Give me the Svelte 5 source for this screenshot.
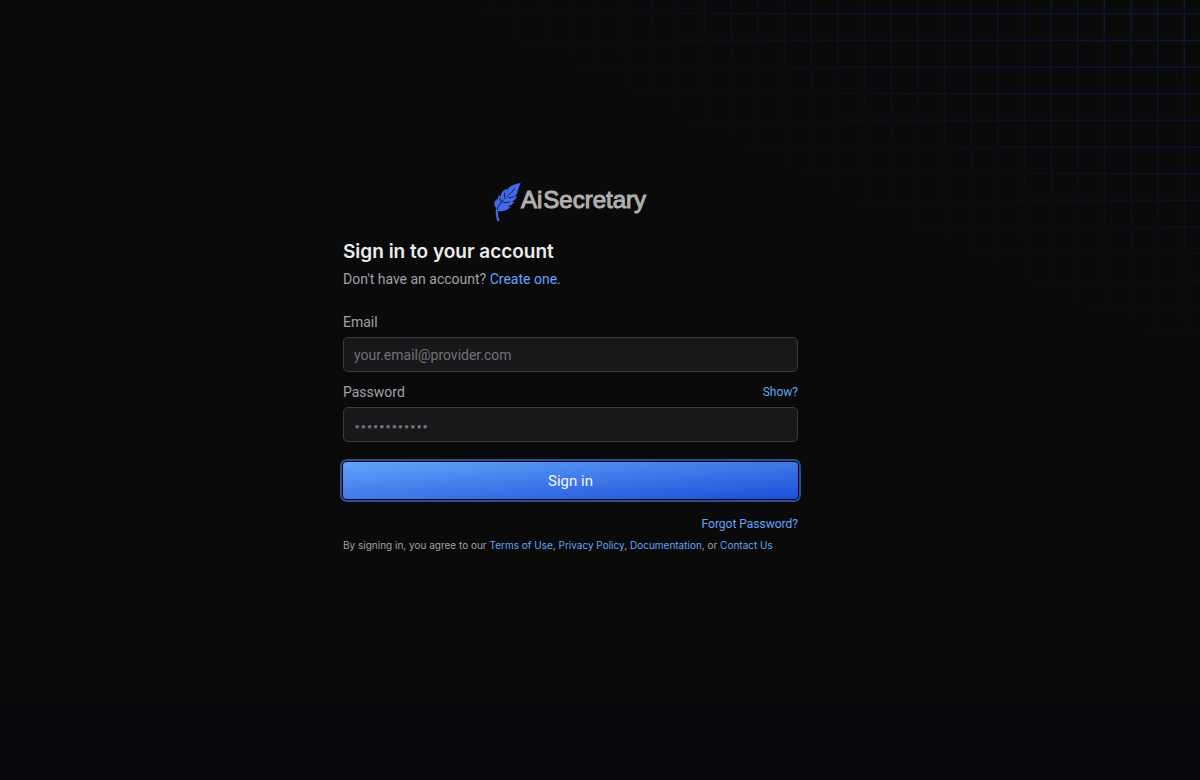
<script>
  let email = $state('');
  let password = $state('');
  let visible = $state(false);
</script>

<div class="page">
  <svg class="grid" aria-hidden="true">
    <defs>
      <pattern id="cells" width="80" height="80" patternUnits="userSpaceOnUse">
        <path
          d="M11 0V80M37.6 0V80M64.3 0V80M0 13.8H80M0 40.5H80M0 67.2H80"
          stroke="#1a3fc4"
          stroke-width="1.4"
          fill="none"
        />
      </pattern>
    </defs>
    <rect width="100%" height="100%" fill="url(#cells)" />
  </svg>

  <main>
    <div class="card">
      <div class="logo">
        <svg viewBox="41 36 81 120" aria-hidden="true">
          <path
            fill="#4169e8"
            d="M121 38C108 42 96 44 87 52C82 56 81 60 79 64L80 56C72 58 66 63 63 70C61 75 62 79 62 83L59 75C52 80 51 86 52 93L48 87C42 94 41 101 43 108L47 114C45 127 47 141 51 154L58 152C54 141 52 131 53 123C61 125 70 124 78 120C83 118 87 115 90 110L82 109C91 107 98 103 102 96L94 95C102 92 108 87 110 79L103 79C110 74 113 67 112 61C115 54 118 46 121 38Z"
          />
          <path
            fill="none"
            stroke="#0a0a0a"
            stroke-width="2.4"
            stroke-linecap="round"
            d="M50 119C54 108 61 98 70 89M80 80C89 72 97 64 103 56M64 97C60 93 59 89 59 85M75 85C72 81 71 75 73 69M70 97C76 99 82 98 88 95M86 83C91 84 96 82 100 80"
          />
        </svg>
        <span>Ai</span>
        <span>Secretary</span>
      </div>

      <h1>Sign in to your account</h1>
      <p class="sub">Don't have an account? <a href="#signup">Create one.</a></p>

      <form onsubmit={(e) => e.preventDefault()}>
        <div class="row">
          <label for="email">Email</label>
        </div>
        <input id="email" type="email" placeholder="your.email@provider.com" bind:value={email} />

        <div class="row">
          <label for="password">Password</label>
          <button class="link" type="button" onclick={() => (visible = !visible)}>
            {visible ? 'Hide?' : 'Show?'}
          </button>
        </div>
        <input
          id="password"
          type={visible ? 'text' : 'password'}
          placeholder="••••••••••••"
          bind:value={password}
        />

        <button class="submit" type="submit">Sign in</button>
      </form>

      <a class="forgot" href="#forgot">Forgot Password?</a>
      <p class="terms">
        By signing in, you agree to our <a href="#terms">Terms of Use</a>,
        <a href="#privacy">Privacy Policy</a>, <a href="#docs">Documentation</a>, or
        <a href="#contact">Contact Us</a>
      </p>
    </div>
  </main>
  <footer></footer>
</div>

<style>
  :global(body) {
    margin: 0;
    background: #05050a;
  }
  .page {
    position: relative;
    display: flex;
    flex-direction: column;
    min-height: 100vh;
    background: #0a0a0a;
    color: #a1a1aa;
    font: 14px/20px Roboto, sans-serif;
  }
  .grid {
    position: absolute;
    top: 0;
    right: 0;
    width: 60%;
    height: 340px;
    opacity: 0.26;
    mask-image: linear-gradient(to top right, transparent 43%, #000 95%);
  }
  main {
    position: relative;
    flex: 1;
    display: flex;
    justify-content: center;
    padding: 180px 80px 24px 21px;
  }
  footer {
    height: 76px;
    background: #05050a;
  }
  .card {
    display: flex;
    flex-direction: column;
    width: 100%;
    max-width: 455px;
  }
  .logo {
    display: flex;
    align-items: center;
    justify-content: center;
    height: 44px;
    color: #b0b0b0;
    font: 24px/28px 'Liberation Sans', sans-serif;
    -webkit-text-stroke: 1px #b0b0b0;
  }
  .logo svg {
    width: 27px;
    height: 40px;
  }
  .logo span {
    padding: 0 1px 4px 0;
  }
  h1 {
    margin: 14px 0 0;
    color: #ececee;
    font-family: Inter, sans-serif;
    font-size: 19px;
    font-weight: 600;
    line-height: 28px;
  }
  p {
    margin: 0;
  }
  .sub {
    margin: 3px 0 23px;
  }
  a,
  .link {
    color: #60a5fa;
    text-decoration: none;
  }
  form {
    display: flex;
    flex-direction: column;
  }
  .row {
    display: flex;
    align-items: center;
    justify-content: space-between;
    margin-bottom: 5px;
  }
  input {
    box-sizing: border-box;
    width: 100%;
    height: 35px;
    margin-bottom: 10px;
    padding: 0 10px;
    border: 1px solid #3a3a40;
    border-radius: 5px;
    background: #18181a;
    color: #f0f0f1;
    font: inherit;
  }
  input::placeholder {
    color: #71717a;
    opacity: 1;
  }
  #password::placeholder {
    font-family: Inter, sans-serif;
    font-size: 11px;
  }
  button {
    border: 0;
    font: inherit;
    cursor: pointer;
  }
  .link {
    padding: 0;
    background: none;
    font-size: 12px;
  }
  .submit {
    height: 37px;
    margin-top: 10px;
    border-radius: 4px;
    background: linear-gradient(to bottom right, #60a5fa, #1d4ed8);
    box-shadow:
      0 0 0 1px #000,
      0 0 0 3px #265194;
    color: #f4f6fb;
    font-size: 15px;
  }
  .forgot {
    align-self: flex-end;
    margin-top: 15px;
    font-size: 12px;
  }
  .terms {
    margin-top: 1px;
    font-family: Inter, sans-serif;
    font-size: 10px;
  }
</style>
